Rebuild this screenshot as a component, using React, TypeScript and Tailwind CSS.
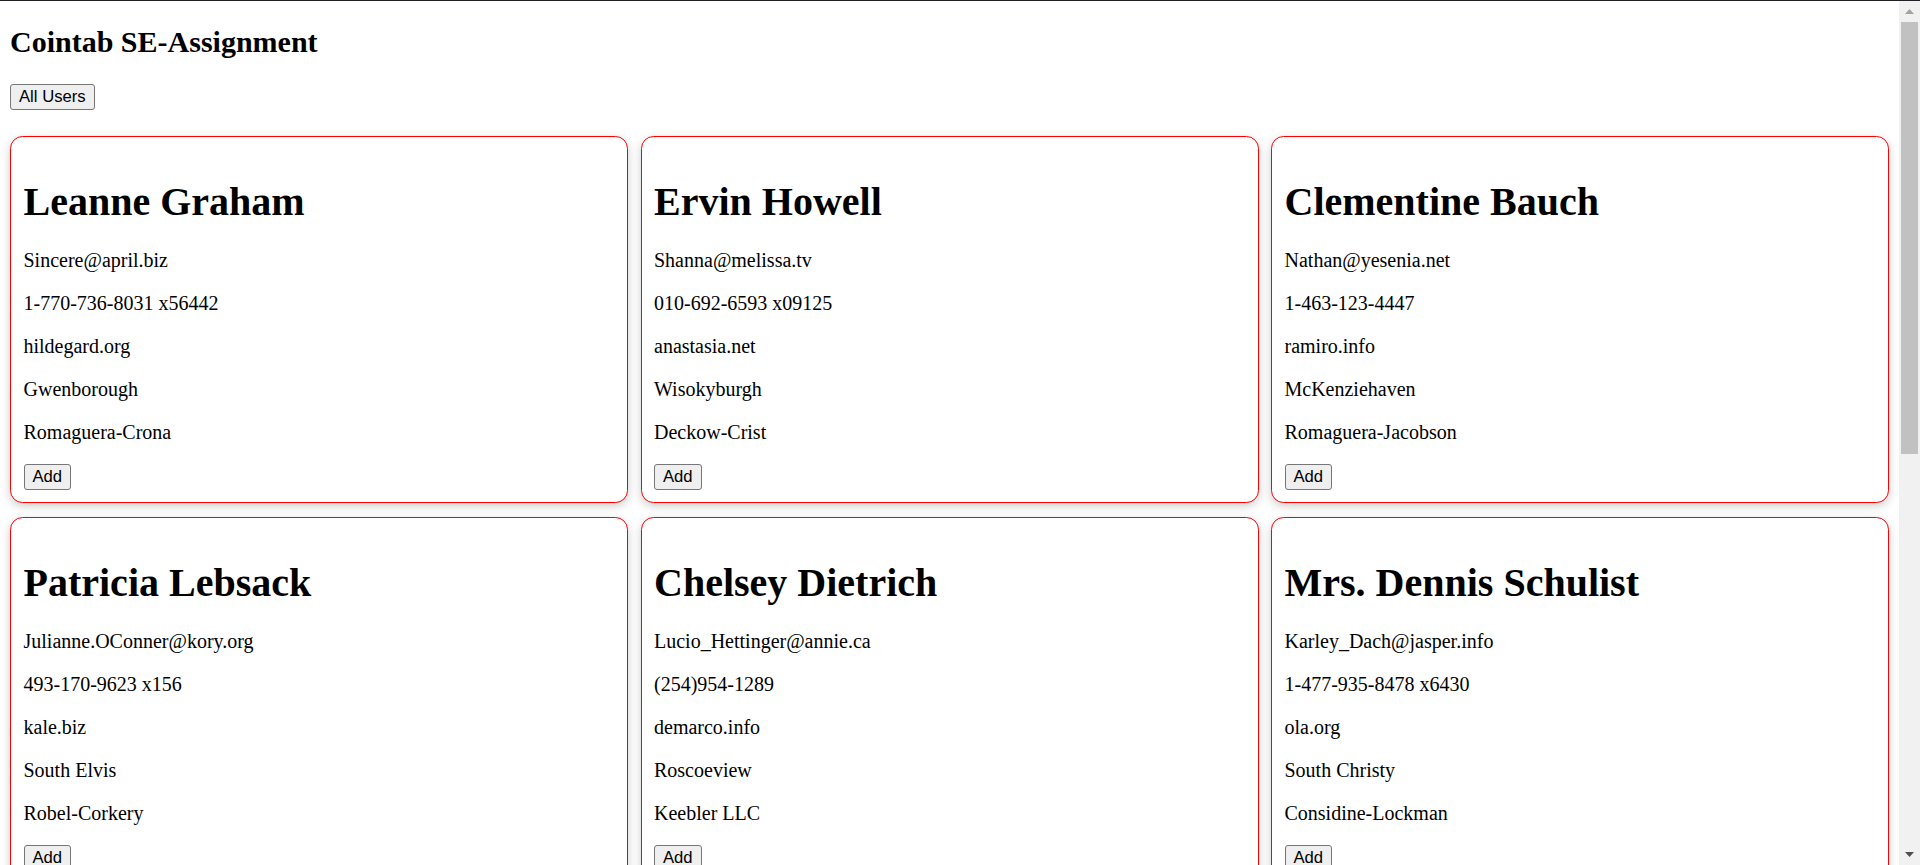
const users = [
  {
    name: "Leanne Graham",
    email: "Sincere@april.biz",
    phone: "1-770-736-8031 x56442",
    website: "hildegard.org",
    city: "Gwenborough",
    company: "Romaguera-Crona",
  },
  {
    name: "Ervin Howell",
    email: "Shanna@melissa.tv",
    phone: "010-692-6593 x09125",
    website: "anastasia.net",
    city: "Wisokyburgh",
    company: "Deckow-Crist",
  },
  {
    name: "Clementine Bauch",
    email: "Nathan@yesenia.net",
    phone: "1-463-123-4447",
    website: "ramiro.info",
    city: "McKenziehaven",
    company: "Romaguera-Jacobson",
  },
  {
    name: "Patricia Lebsack",
    email: "Julianne.OConner@kory.org",
    phone: "493-170-9623 x156",
    website: "kale.biz",
    city: "South Elvis",
    company: "Robel-Corkery",
  },
  {
    name: "Chelsey Dietrich",
    email: "Lucio_Hettinger@annie.ca",
    phone: "(254)954-1289",
    website: "demarco.info",
    city: "Roscoeview",
    company: "Keebler LLC",
  },
  {
    name: "Mrs. Dennis Schulist",
    email: "Karley_Dach@jasper.info",
    phone: "1-477-935-8478 x6430",
    website: "ola.org",
    city: "South Christy",
    company: "Considine-Lockman",
  },
];

function NativeButton({ children }: { children: string }) {
  return (
    <button className="rounded-[3px] border-[1.25px] border-[#767676] bg-[#efefef] px-[8px] py-[1.25px] font-['Liberation_Sans',Arial,sans-serif] text-[16.67px] leading-[21.5px] text-black">
      {children}
    </button>
  );
}

function UserCard({ user }: { user: (typeof users)[number] }) {
  return (
    <div className="rounded-[12.5px] border-[1.25px] border-[#ff0000] bg-white p-[12.5px] shadow-[0_3px_10px_rgba(0,0,0,0.2)]">
      <h1 className="mt-[29.5px] mb-[24px] text-[40px] font-bold leading-[46px]">
        {user.name}
      </h1>
      {[user.email, user.phone, user.website, user.city, user.company].map(
        (line) => (
          <p key={line} className="mb-[20px] text-[20px] leading-[23px]">
            {line}
          </p>
        ),
      )}
      <NativeButton>Add</NativeButton>
    </div>
  );
}

function Scrollbar() {
  return (
    <div className="flex w-[21px] shrink-0 flex-col bg-[#f1f1f1]">
      <div className="flex h-[21px] items-center justify-center">
        <svg width="9" height="5" viewBox="0 0 9 5">
          <path d="M0 5 L4.5 0 L9 5 Z" fill="#a3a3a3" />
        </svg>
      </div>
      <div className="flex-1 px-[2px]">
        <div className="h-[432px] bg-[#c1c1c1]" />
      </div>
      <div className="flex h-[21px] items-center justify-center">
        <svg width="9" height="5" viewBox="0 0 9 5">
          <path d="M0 0 L9 0 L4.5 5 Z" fill="#505050" />
        </svg>
      </div>
    </div>
  );
}

export default function App() {
  return (
    <div className="flex h-[865px] overflow-hidden border-t border-[#202124] bg-white font-['Liberation_Serif','Times_New_Roman',serif] text-black">
      <main className="min-w-0 flex-1 px-[10px]">
        <h2 className="mt-[24px] mb-[24px] text-[30px] font-bold leading-[34.5px]">
          Cointab SE-Assignment
        </h2>
        <NativeButton>All Users</NativeButton>
        <div className="mt-[26px] grid grid-cols-3 gap-x-[12.5px] gap-y-[14px]">
          {users.map((u) => (
            <UserCard key={u.name} user={u} />
          ))}
        </div>
      </main>
      <Scrollbar />
    </div>
  );
}
